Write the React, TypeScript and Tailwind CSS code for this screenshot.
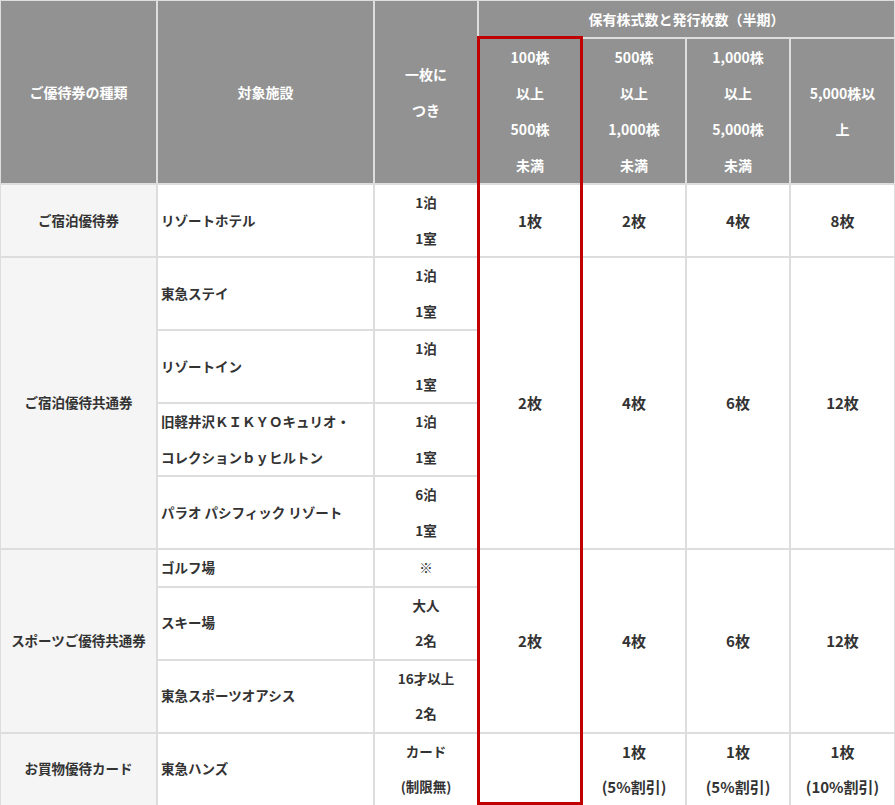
export default function App() {
  const th = "bg-[#929292] text-white font-bold text-[14px] leading-[36px] border-2 border-[#dddddd] text-center align-middle p-0";
  const td = "border-2 border-[#dddddd] text-[13.5px] leading-[35.5px] font-bold text-[#333] align-middle p-0";
  const c = td + " text-center";
  const l = td + " text-left pl-[3px]";
  const h = td + " text-center bg-[#f4f5f4]";
  const big = td + " text-center text-[15px]";
  return (
    <div className="relative w-[895px] h-[805px] overflow-hidden bg-white" style={{ fontFamily: '"Noto Sans CJK JP", "Noto Sans", sans-serif' }}>
      <table className="table-fixed border-collapse w-[897px] -ml-px -mt-px">
        <colgroup>
          <col className="w-[157px]" /><col className="w-[217px]" /><col className="w-[104px]" />
          <col className="w-[104px]" /><col className="w-[104px]" /><col className="w-[104px]" /><col className="w-[105px]" />
        </colgroup>
        <tbody>
          <tr className="h-[37px]">
            <td rowSpan={2} className={th}>ご優待券の種類</td>
            <td rowSpan={2} className={th}>対象施設</td>
            <td rowSpan={2} className={th}>一枚に<br />つき</td>
            <td colSpan={4} className={th}>保有株式数と発行枚数（半期）</td>
          </tr>
          <tr>
            <td className={th}>100株<br />以上<br />500株<br />未満</td>
            <td className={th}>500株<br />以上<br />1,000株<br />未満</td>
            <td className={th}>1,000株<br />以上<br />5,000株<br />未満</td>
            <td className={th + " leading-[24px]"}>5,000株以<br />上</td>
          </tr>
          <tr>
            <td className={h}>ご宿泊優待券</td>
            <td className={l}>リゾートホテル</td>
            <td className={c}>1泊<br />1室</td>
            <td className={big}>1枚</td>
            <td className={big}>2枚</td>
            <td className={big}>4枚</td>
            <td className={big}>8枚</td>
          </tr>
          <tr>
            <td rowSpan={4} className={h}>ご宿泊優待共通券</td>
            <td className={l}>東急ステイ</td>
            <td className={c}>1泊<br />1室</td>
            <td rowSpan={4} className={big}>2枚</td>
            <td rowSpan={4} className={big}>4枚</td>
            <td rowSpan={4} className={big}>6枚</td>
            <td rowSpan={4} className={big}>12枚</td>
          </tr>
          <tr>
            <td className={l}>リゾートイン</td>
            <td className={c}>1泊<br />1室</td>
          </tr>
          <tr>
            <td className={l}>旧軽井沢ＫＩＫＹＯキュリオ・<br />コレクションｂｙヒルトン</td>
            <td className={c}>1泊<br />1室</td>
          </tr>
          <tr>
            <td className={l}>パラオ パシフィック リゾート</td>
            <td className={c}>6泊<br />1室</td>
          </tr>
          <tr>
            <td rowSpan={3} className={h}>スポーツご優待共通券</td>
            <td className={l}>ゴルフ場</td>
            <td className={c}>※</td>
            <td rowSpan={3} className={big}>2枚</td>
            <td rowSpan={3} className={big}>4枚</td>
            <td rowSpan={3} className={big}>6枚</td>
            <td rowSpan={3} className={big}>12枚</td>
          </tr>
          <tr>
            <td className={l}>スキー場</td>
            <td className={c}>大人<br />2名</td>
          </tr>
          <tr>
            <td className={l}>東急スポーツオアシス</td>
            <td className={c}>16才以上<br />2名</td>
          </tr>
          <tr>
            <td className={h}>お買物優待カード</td>
            <td className={l}>東急ハンズ</td>
            <td className={c}>カード<br />(制限無)</td>
            <td className={big}></td>
            <td className={big}>1枚<br />(5%割引)</td>
            <td className={big}>1枚<br />(5%割引)</td>
            <td className={big}>1枚<br />(10%割引)</td>
          </tr>
        </tbody>
      </table>
      <div className="absolute left-[477px] top-[36px] w-[106px] h-[769px] border-[3px] border-[#c00000] pointer-events-none" />
    </div>
  );
}
